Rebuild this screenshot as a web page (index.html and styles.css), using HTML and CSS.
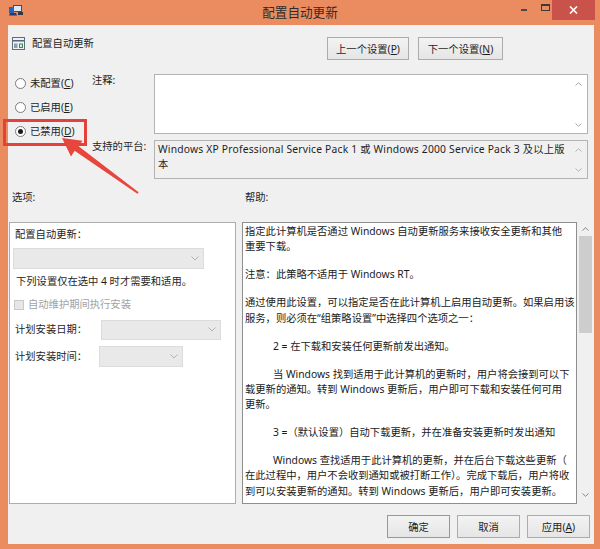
FILE: index.html
```html
<!DOCTYPE html>
<html lang="zh-CN">
<head>
<meta charset="utf-8">
<title>配置自动更新</title>
<link rel="stylesheet" href="styles.css">
</head>
<body>
<div class="window">
  <div class="titlebar">
    <div class="tb-left">
      <svg class="app-icon" width="14" height="11" viewBox="0 0 14 11">
        <rect x="4.5" y="0.5" width="8" height="6" fill="#d6e8fa" stroke="#1d4f9c"/>
        <rect x="0" y="2" width="5" height="6" fill="#2a62b8"/>
        <path d="M1 8h6l1 2.5H0z" fill="#1b3e78"/>
        <rect x="9" y="7" width="5" height="3" fill="#33383f"/>
      </svg>
    </div>
    <div class="title">配置自动更新</div>
    <div class="controls">
      <span class="glyph-min"></span>
      <span class="glyph-max"></span>
      <span class="close">
        <svg width="9" height="8" viewBox="0 0 9 8"><path d="M1 0.5L8 7.5M8 0.5L1 7.5" stroke="#fff" stroke-width="1.6"/></svg>
      </span>
    </div>
  </div>

  <div class="client">
    <div class="header">
      <div class="policy-name">
        <svg width="13" height="13" viewBox="0 0 13 13">
          <rect x="0.5" y="0.5" width="12" height="12" fill="#eef2f6" stroke="#5d6d7e"/>
          <rect x="1" y="3" width="11" height="1.5" fill="#4d6580"/>
          <rect x="2" y="6.5" width="3.5" height="4.5" fill="#8d9cab"/>
          <rect x="7" y="6.5" width="4" height="4.5" fill="#3f8c55"/>
          <rect x="8" y="7.5" width="2" height="2.5" fill="#d9eadc"/>
        </svg>
        <span>配置自动更新</span>
      </div>
      <div class="nav-buttons">
        <button class="btn btn-prev">上一个设置(<u>P</u>)</button>
        <button class="btn btn-next">下一个设置(<u>N</u>)</button>
      </div>
    </div>

    <div class="settings">
      <div class="radios">
        <div class="radio-row"><span class="radio"></span><span>未配置(<u>C</u>)</span></div>
        <div class="radio-row"><span class="radio"></span><span>已启用(<u>E</u>)</span></div>
        <div class="radio-row"><span class="radio checked"></span><span>已禁用(<u>D</u>)</span></div>
      </div>
      <div class="field-label">注释:</div>
      <div class="comment">
        <div class="box-text"></div>
        <div class="mini-scroll">
          <svg width="7" height="4" viewBox="0 0 7 4"><path d="M0.5 3.5L3.5 0.7L6.5 3.5" fill="none" stroke="#a8a8a8"/></svg>
          <svg width="7" height="4" viewBox="0 0 7 4"><path d="M0.5 0.5L3.5 3.3L6.5 0.5" fill="none" stroke="#a8a8a8"/></svg>
        </div>
      </div>
      <div class="field-label">支持的平台:</div>
      <div class="platform">
        <div class="box-text platform-text">Windows XP Professional Service Pack 1 或 Windows 2000 Service Pack 3 及以上版<br>本</div>
        <div class="mini-scroll">
          <svg width="7" height="4" viewBox="0 0 7 4"><path d="M0.5 3.5L3.5 0.7L6.5 3.5" fill="none" stroke="#b4b4b4"/></svg>
          <svg width="7" height="4" viewBox="0 0 7 4"><path d="M0.5 0.5L3.5 3.3L6.5 0.5" fill="none" stroke="#b4b4b4"/></svg>
        </div>
      </div>
    </div>

    <div class="section-labels">
      <div>选项:</div>
      <div>帮助:</div>
    </div>

    <div class="panels">
      <div class="options">
        <div class="opt-title">配置自动更新：</div>
        <div class="combo combo-main"><svg width="8" height="5" viewBox="0 0 8 5"><path d="M0.5 0.5L4 4L7.5 0.5" fill="none" stroke="#b2b2b2"/></svg></div>
        <div class="opt-note">下列设置仅在选中 4 时才需要和适用。</div>
        <div class="check-row"><span class="checkbox"></span><span>自动维护期间执行安装</span></div>
        <div class="sched-row">
          <span class="sched-label">计划安装日期：</span>
          <div class="combo combo-date"><svg width="8" height="5" viewBox="0 0 8 5"><path d="M0.5 0.5L4 4L7.5 0.5" fill="none" stroke="#b2b2b2"/></svg></div>
        </div>
        <div class="sched-row sched-row-2">
          <span class="sched-label">计划安装时间：</span>
          <div class="combo combo-time"><svg width="8" height="5" viewBox="0 0 8 5"><path d="M0.5 0.5L4 4L7.5 0.5" fill="none" stroke="#b2b2b2"/></svg></div>
        </div>
      </div>
      <div class="help">
        <p>指定此计算机是否通过 Windows 自动更新服务来接收安全更新和其他<br>重要下载。</p>
        <p>注意：此策略不适用于 Windows RT。</p>
        <p>通过使用此设置，可以指定是否在此计算机上启用自动更新。如果启用该<br>服务，则必须在“组策略设置”中选择四个选项之一：</p>
        <p class="ind">2 = 在下载和安装任何更新前发出通知。</p>
        <p class="ind">当 Windows 找到适用于此计算机的更新时，用户将会接到可以下<br>载更新的通知。转到 Windows 更新后，用户即可下载和安装任何可用<br>更新。</p>
        <p class="ind">3 =（默认设置）自动下载更新，并在准备安装更新时发出通知</p>
        <p class="ind">Windows 查找适用于此计算机的更新，并在后台下载这些更新（<br>在此过程中，用户不会收到通知或被打断工作）。完成下载后，用户将收<br>到可以安装更新的通知。转到 Windows 更新后，用户即可安装更新。</p>
      </div>
      <div class="vscroll">
        <div class="vs-arrow"><svg width="7" height="4" viewBox="0 0 7 4"><path d="M0.5 3.5L3.5 0.7L6.5 3.5" fill="none" stroke="#8a8a8a"/></svg></div>
        <div class="vs-thumb"></div>
        <div class="vs-space"></div>
        <div class="vs-arrow vs-down"><svg width="7" height="4" viewBox="0 0 7 4"><path d="M0.5 0.5L3.5 3.3L6.5 0.5" fill="none" stroke="#8a8a8a"/></svg></div>
      </div>
    </div>

    <div class="footer">
      <button class="btn btn-foot btn-default">确定</button>
      <button class="btn btn-foot">取消</button>
      <button class="btn btn-foot">应用(<u>A</u>)</button>
    </div>
  </div>

  <div class="mark-box"></div>
  <svg class="mark-arrow" width="600" height="549" viewBox="0 0 600 549">
    <polygon points="62,138 82.5,140.8 78.6,146.3 138.6,192.3 137.4,193.7 74.6,150.8 71,156.5" fill="#e8463c"/>
  </svg>
</div>
</body>
</html>
```

FILE: styles.css
```css
* { box-sizing: border-box; }
html, body { margin: 0; padding: 0; }
body {
  width: 600px;
  height: 549px;
  overflow: hidden;
  font-family: "Noto Sans", "Noto Sans CJK SC", sans-serif;
  font-size: 10.3px;
  color: #1e1e1e;
}
u { text-decoration: underline; text-underline-offset: 1px; }

.window {
  position: relative;
  width: 600px;
  height: 549px;
  background: #ea8c5f;
  display: flex;
  flex-direction: column;
}

/* title bar */
.titlebar {
  height: 25px;
  flex: none;
  display: grid;
  grid-template-columns: 1fr auto 1fr;
}
.tb-left { display: flex; align-items: flex-start; padding: 5px 0 0 9px; }
.title { font-size: 12.6px; line-height: 25px; color: #2c2c2c; }
.controls {
  justify-self: end;
  display: flex;
  align-items: flex-start;
  height: 20px;
  margin-right: 5px;
}
.glyph-min { width: 6px; height: 2px; background: #4a4a4a; margin: 9px 14px 0 0; }
.glyph-max {
  width: 9px; height: 7px;
  border: 1px solid #3a3a3a; border-top-width: 2px;
  margin: 4px 2px 0 0;
}
.close {
  width: 43px; height: 20px;
  background: #c9524a;
  display: flex; align-items: center; justify-content: center;
}

/* client */
.client {
  flex: 1;
  margin: 0 6px 5px 8px;
  background: #f0f0f0;
  padding: 12px 0 5px 0;
  display: flex;
  flex-direction: column;
}

.header { display: flex; align-items: flex-start; height: 23px; }
.policy-name { display: flex; align-items: center; gap: 7px; margin-left: 4px; height: 13px; line-height: 15px; }
.policy-name svg { flex: none; }
.nav-buttons { margin-left: auto; margin-right: 91px; display: flex; gap: 9px; }

.btn {
  height: 23px;
  border: 1px solid #acacac;
  background: linear-gradient(#f3f3f3, #e5e5e5);
  font: inherit;
  color: #1e1e1e;
  padding: 0;
  line-height: 20px;
  text-align: center;
}
.btn-prev { width: 82px; }
.btn-next { width: 85px; }

/* settings grid */
.settings {
  margin: 14px 6px 0 0;
  display: grid;
  grid-template-columns: 84px 62px 1fr;
  grid-template-rows: 60px 39px;
  row-gap: 6px;
}
.radios {
  grid-row: 1 / 3;
  padding: 1.5px 0 0 7px;
  display: flex;
  flex-direction: column;
  gap: 9px;
}
.radio-row { display: flex; align-items: center; gap: 4px; height: 15px; line-height: 15px; }
.radio {
  width: 11px; height: 11px;
  border-radius: 50%;
  border: 1px solid #7b7b7b;
  background: #fff;
  display: flex; align-items: center; justify-content: center;
  flex: none;
}
.radio.checked::after {
  content: "";
  width: 5px; height: 5px; border-radius: 50%;
  background: #1a1a1a;
}
.field-label { line-height: 15px; margin-top: -1px; }
.comment, .platform {
  border: 1px solid #b3b3b3;
  display: flex;
}
.comment { background: #fff; }
.platform { background: #f0f0f0; }
.box-text { flex: 1; padding: 1px 3px; line-height: 15px; white-space: nowrap; overflow: hidden; }
.platform-text { letter-spacing: 0.2px; }
.mini-scroll {
  width: 17px;
  flex: none;
  display: flex;
  flex-direction: column;
  justify-content: space-between;
  align-items: center;
  padding: 7px 0 6px;
}

/* section labels */
.section-labels {
  margin-top: 11px;
  padding-left: 4px;
  display: grid;
  grid-template-columns: 233px 1fr;
  line-height: 15px;
  height: 15px;
}

/* panels */
.panels { display: flex; margin: 17px 0 0 1px; height: 282px; }
.options {
  width: 227px;
  border: 1px solid #adadad;
  background: #fff;
  padding: 3.5px 0 0 5px;
  line-height: 15px;
}
.combo {
  height: 21px;
  background: #e9e9e9;
  border: 1px solid #dcdcdc;
  display: flex;
  align-items: center;
  justify-content: flex-end;
  padding-right: 4px;
}
.combo-main { width: 191px; margin: 6px 0 0 -2px; }
.opt-note { margin-top: 5.5px; margin-left: 1px; }
.check-row { display: flex; align-items: center; gap: 4px; margin-top: 8px; margin-left: -1px; color: #a2a2a2; }
.checkbox { width: 10px; height: 10px; background: #e6e6e6; border: 1px solid #c9c9c9; flex: none; }
.sched-row { display: flex; align-items: center; margin-top: 7.5px; }
.sched-row-2 { margin-top: 6px; }
.sched-label { width: 86px; flex: none; }
.combo-date { width: 120px; height: 20px; }
.combo-time { width: 84px; margin-left: -2px; }

.help {
  width: 335px;
  margin-left: 6px;
  border: 1px solid #8e8e8e;
  background: #fff;
  padding: 1px 2px 0 2px;
  overflow: hidden;
  line-height: 15.3px;
  color: #1a1a1a;
}
.help p { margin: 0 0 12.7px 0; white-space: nowrap; }
.help p.ind { text-indent: 28px; }

.vscroll { width: 14px; margin-left: 1px; display: flex; flex-direction: column; align-items: center; }
.vs-arrow { height: 14px; display: flex; align-items: center; justify-content: center; }
.vs-thumb { width: 13px; height: 97px; background: #cdcdcd; }
.vs-space { flex: 1; }
.vs-down { height: 18px; }

/* footer */
.footer { margin: 11px 4px 0 0; display: flex; justify-content: flex-end; gap: 7px; }
.btn-foot { width: 63px; }
.btn-default { border-color: #6aa3da; }

/* annotation overlay */
.mark-box {
  position: absolute;
  left: 3px; top: 119px;
  width: 84px; height: 27px;
  border: 3px solid #e2423b;
}
.mark-arrow { position: absolute; left: 0; top: 0; pointer-events: none; }
```
